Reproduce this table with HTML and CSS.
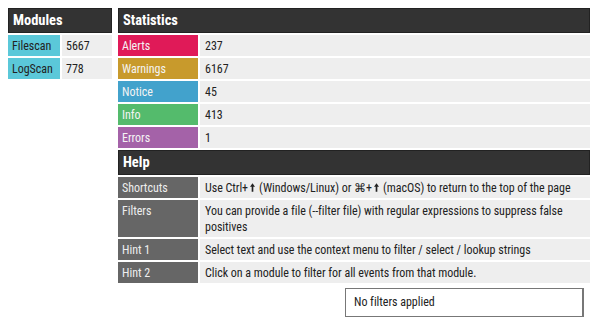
FILE: index.html
```html
<!DOCTYPE html>
<html lang="en">
  <head>
    <meta charset="UTF-8" />
    <meta name="viewport" content="width=device-width, initial-scale=1.0" />
    <link rel="stylesheet" href="styles.css">
    <title>Scan report</title>
  </head>
  <body>
    <div class="page">
      <div class="box modules">
        <div class="head">Modules</div>
        <div class="key mod">Filescan</div><div class="val">5667</div>
        <div class="key mod">LogScan</div><div class="val">778</div>
      </div>

      <div class="side">
        <div class="box stats">
          <div class="head">Statistics</div>
          <div class="key alerts">Alerts</div><div class="val">237</div>
          <div class="key warnings">Warnings</div><div class="val">6167</div>
          <div class="key notice">Notice</div><div class="val">45</div>
          <div class="key info">Info</div><div class="val">413</div>
          <div class="key errors">Errors</div><div class="val">1</div>

          <div class="head">Help</div>
          <div class="key hint">Shortcuts</div>
          <div class="val">Use Ctrl+<svg class="arrow" viewBox="0 0 6 10"><path d="M3 0 L6 4 L4 4 L4 10 L2 10 L2 4 L0 4 Z"/></svg>(Windows/Linux) or ⌘+<svg class="arrow" viewBox="0 0 6 10"><path d="M3 0 L6 4 L4 4 L4 10 L2 10 L2 4 L0 4 Z"/></svg>(macOS) to return to the top of the page</div>
          <div class="key hint">Filters</div>
          <div class="val">You can provide a file (--filter file) with regular expressions to suppress false positives</div>
          <div class="key hint">Hint 1</div>
          <div class="val">Select text and use the context menu to filter / select / lookup strings</div>
          <div class="key hint">Hint 2</div>
          <div class="val">Click on a module to filter for all events from that module.</div>
        </div>

        <div class="filters">No filters applied</div>
      </div>
    </div>
  </body>
</html>
```

FILE: styles.css
```css
body {
  margin: 8px;
  font-family: "Roboto Condensed", "Liberation Sans Narrow", Roboto, sans-serif;
  font-stretch: condensed;
  font-size: 12px;
  letter-spacing: -0.03px;
  color: #222;
  background: #fff;
}
.page {
  display: flex;
  gap: 6px;
  align-items: flex-start;
}
.box {
  display: grid;
  grid-template-columns: 52px 1fr;
  gap: 2px;
}
.modules {
  width: 104px;
}
.side {
  width: 472px;
  display: flex;
  flex-direction: column;
}
.stats {
  grid-template-columns: 80px 1fr;
}
.head {
  grid-column: 1 / -1;
  background: #333;
  color: #fff;
  font-weight: bold;
  font-size: 14.5px;
  height: 25px;
  line-height: 23px;
  padding-left: 4px;
  box-sizing: border-box;
  border: 1px solid #222;
}
.key,
.val {
  min-height: 21px;
  line-height: 16px;
  padding: 3px 4px 2px;
  box-sizing: border-box;
}
.val {
  background: #eee;
}
.stats .val {
  padding-left: 5px;
}
.key {
  color: #f4f4f4;
}
.mod {
  background: #5bc8d9;
  color: #222;
}
.alerts {
  background: #e01a58;
}
.warnings {
  background: #c89a2c;
}
.notice {
  background: #42a2cc;
}
.info {
  background: #54bb6c;
}
.errors {
  background: #a462a8;
}
.hint {
  background: #666;
  color: #eee;
}
.arrow {
  width: 5px;
  height: 9px;
  margin: 0 4px 0 2px;
  fill: #222;
}
.filters {
  align-self: flex-end;
  margin: 5px 6px 0 0;
  width: 239px;
  height: 29px;
  line-height: 27px;
  padding-left: 8px;
  box-sizing: border-box;
  border: 1px solid #777;
  border-right-width: 2px;
  background: #fff;
}
```
